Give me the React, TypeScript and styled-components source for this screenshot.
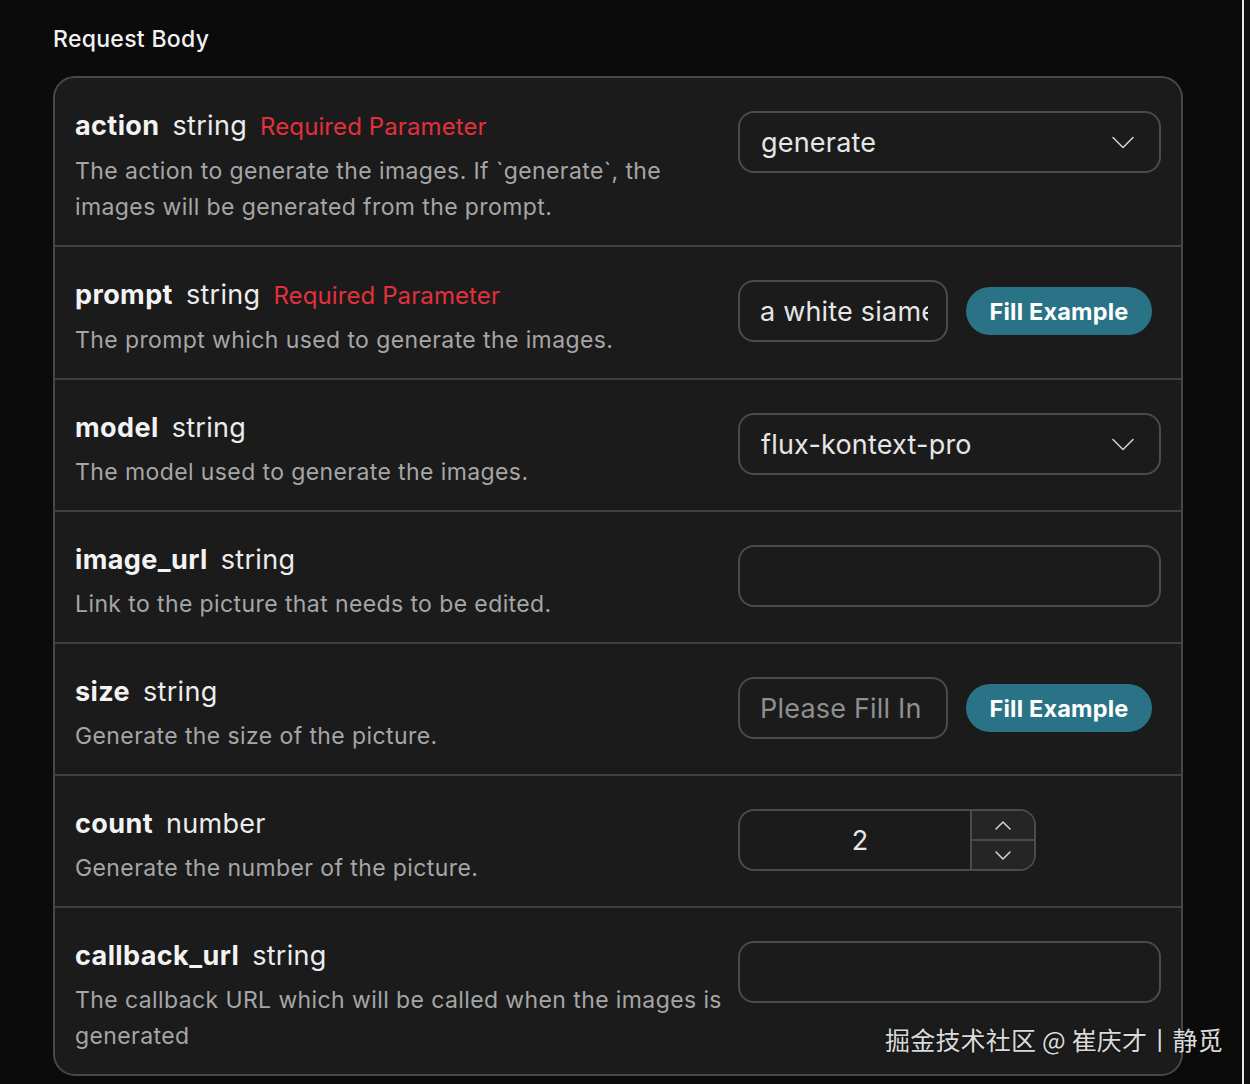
import React from "react";
import styled, { createGlobalStyle } from "styled-components";

const GlobalStyle = createGlobalStyle`
  html, body {
    margin: 0;
    padding: 0;
    background: #0b0b0b;
  }
  body {
    font-family: Inter, "Noto Sans", "Noto Sans CJK SC", sans-serif;
    color: #eeeeee;
  }
  * {
    box-sizing: border-box;
  }
`;

const Page = styled.div`
  display: flex;
  min-height: 1084px;
  position: relative;
`;

const Main = styled.main`
  width: 1242px;
  padding: 24px 0 11px 53px;
  background: #0b0b0b;
`;

const EdgeLine = styled.div`
  width: 2px;
  background: #e6e6e6;
`;

const Gutter = styled.div`
  flex: 1;
  background: #101010;
`;

const Heading = styled.h3`
  margin: 0 0 22px;
  font-size: 23px;
  line-height: 30px;
  font-weight: 500;
  letter-spacing: 0.3px;
  color: #f2f2f2;
`;

const Card = styled.section`
  width: 1130px;
  background: #1b1b1b;
  border: 2px solid #474747;
  border-radius: 22px;
  overflow: hidden;
`;

const Row = styled.div<{ $last?: boolean }>`
  display: grid;
  grid-template-columns: 1fr 423px;
  column-gap: 12px;
  padding: 25px 20px 20px 20px;
  border-bottom: ${(p) => (p.$last ? "none" : "2px solid #404040")};
`;

const Info = styled.div``;

const TitleLine = styled.div`
  display: flex;
  align-items: baseline;
  line-height: 46px;
  white-space: nowrap;
`;

const Name = styled.span`
  font-size: 27px;
  font-weight: 700;
  letter-spacing: 0.4px;
  color: #f3f3f3;
`;

const Type = styled.span`
  font-size: 27px;
  font-weight: 400;
  letter-spacing: 0.3px;
  color: #ececec;
  margin-left: 13px;
`;

const Required = styled.span`
  font-size: 24px;
  letter-spacing: 0.1px;
  color: #e2303c;
  margin-left: 13px;
`;

const Desc = styled.p`
  margin: 3px 0 0;
  font-size: 23px;
  line-height: 36px;
  letter-spacing: 0.4px;
  color: #a6a6a6;
`;

const Controls = styled.div`
  display: flex;
  align-items: center;
  gap: 18px;
  margin-top: 8px;
  align-self: start;
`;

const Field = styled.div<{ $width?: number }>`
  display: flex;
  align-items: center;
  width: ${(p) => (p.$width ? `${p.$width}px` : "100%")};
  height: 62px;
  border: 2px solid #4b4b4b;
  border-radius: 16px;
  background: #1b1b1b;
  overflow: hidden;
`;

const TextInput = styled.input`
  flex: 1;
  min-width: 0;
  height: 100%;
  padding: 0 18px 0 20px;
  border: none;
  outline: none;
  background: transparent;
  font-family: Inter, "Noto Sans", sans-serif;
  font-size: 27px;
  letter-spacing: 0.2px;
  color: #e6e6e6;
  &::placeholder {
    color: #8f8f8f;
  }
`;

const SelectValue = styled.span`
  flex: 1;
  padding-left: 21px;
  font-size: 27px;
  letter-spacing: 0.2px;
  color: #e6e6e6;
`;

const Chevron = styled.svg`
  margin-right: 25px;
`;

const FillButton = styled.button`
  height: 48px;
  width: 186px;
  border: none;
  border-radius: 24px;
  background: #2a7387;
  color: #ffffff;
  font-family: Inter, "Noto Sans", sans-serif;
  font-size: 23.5px;
  font-weight: 700;
  letter-spacing: 0.2px;
  cursor: pointer;
`;

const NumberValue = styled.span`
  flex: 1;
  padding-left: 10px;
  text-align: center;
  font-size: 27px;
  color: #e8e8e8;
`;

const Stepper = styled.div`
  display: flex;
  flex-direction: column;
  width: 64px;
  height: 100%;
  border-left: 2px solid #4b4b4b;
  background: #252525;
`;

const StepButton = styled.div<{ $top?: boolean }>`
  flex: 1;
  display: flex;
  align-items: center;
  justify-content: center;
  border-bottom: ${(p) => (p.$top ? "2px solid #4b4b4b" : "none")};
`;

const Watermark = styled.div`
  position: absolute;
  left: 885px;
  top: 1021px;
  font-family: "Noto Sans CJK SC", "Noto Sans", sans-serif;
  font-size: 25px;
  line-height: 36px;
  letter-spacing: 0.2px;
  color: #dadada;
  text-shadow: 0 0 2px rgba(0, 0, 0, 0.6);
  white-space: nowrap;
`;

function ChevronDown({ size = 22 }: { size?: number }) {
  return (
    <Chevron width={size} height={size / 2 + 2} viewBox="0 0 22 12" fill="none">
      <path d="M1 1l10 10L21 1" stroke="#cfcfcf" strokeWidth="1.6" strokeLinecap="round" strokeLinejoin="round" />
    </Chevron>
  );
}

function SmallChevron({ up }: { up?: boolean }) {
  return (
    <svg width="16" height="9" viewBox="0 0 16 9" fill="none">
      <path
        d={up ? "M1 8l7-7 7 7" : "M1 1l7 7 7-7"}
        stroke="#d6d6d6"
        strokeWidth="1.5"
        strokeLinecap="round"
        strokeLinejoin="round"
      />
    </svg>
  );
}

type Param = {
  name: string;
  type: string;
  required?: boolean;
  desc: string;
  control: React.ReactNode;
};

const params: Param[] = [
  {
    name: "action",
    type: "string",
    required: true,
    desc: "The action to generate the images. If `generate`, the images will be generated from the prompt.",
    control: (
      <Field>
        <SelectValue>generate</SelectValue>
        <ChevronDown />
      </Field>
    ),
  },
  {
    name: "prompt",
    type: "string",
    required: true,
    desc: "The prompt which used to generate the images.",
    control: (
      <>
        <Field $width={210}>
          <TextInput readOnly value="a white siamese cat" />
        </Field>
        <FillButton>Fill Example</FillButton>
      </>
    ),
  },
  {
    name: "model",
    type: "string",
    desc: "The model used to generate the images.",
    control: (
      <Field>
        <SelectValue>flux-kontext-pro</SelectValue>
        <ChevronDown />
      </Field>
    ),
  },
  {
    name: "image_url",
    type: "string",
    desc: "Link to the picture that needs to be edited.",
    control: (
      <Field>
        <TextInput readOnly value="" />
      </Field>
    ),
  },
  {
    name: "size",
    type: "string",
    desc: "Generate the size of the picture.",
    control: (
      <>
        <Field $width={210}>
          <TextInput readOnly placeholder="Please Fill In" />
        </Field>
        <FillButton>Fill Example</FillButton>
      </>
    ),
  },
  {
    name: "count",
    type: "number",
    desc: "Generate the number of the picture.",
    control: (
      <Field $width={298}>
        <NumberValue>2</NumberValue>
        <Stepper>
          <StepButton $top>
            <SmallChevron up />
          </StepButton>
          <StepButton>
            <SmallChevron />
          </StepButton>
        </Stepper>
      </Field>
    ),
  },
  {
    name: "callback_url",
    type: "string",
    desc: "The callback URL which will be called when the images is generated",
    control: (
      <Field>
        <TextInput readOnly value="" />
      </Field>
    ),
  },
];

export default function App() {
  return (
    <>
      <GlobalStyle />
      <Page>
        <Main>
          <Heading>Request Body</Heading>
          <Card>
            {params.map((p, i) => (
              <Row key={p.name} $last={i === params.length - 1}>
                <Info>
                  <TitleLine>
                    <Name>{p.name}</Name>
                    <Type>{p.type}</Type>
                    {p.required && <Required>Required Parameter</Required>}
                  </TitleLine>
                  <Desc>{p.desc}</Desc>
                </Info>
                <Controls>{p.control}</Controls>
              </Row>
            ))}
          </Card>
        </Main>
        <EdgeLine />
        <Gutter />
        <Watermark>掘金技术社区 @ 崔庆才丨静觅</Watermark>
      </Page>
    </>
  );
}
